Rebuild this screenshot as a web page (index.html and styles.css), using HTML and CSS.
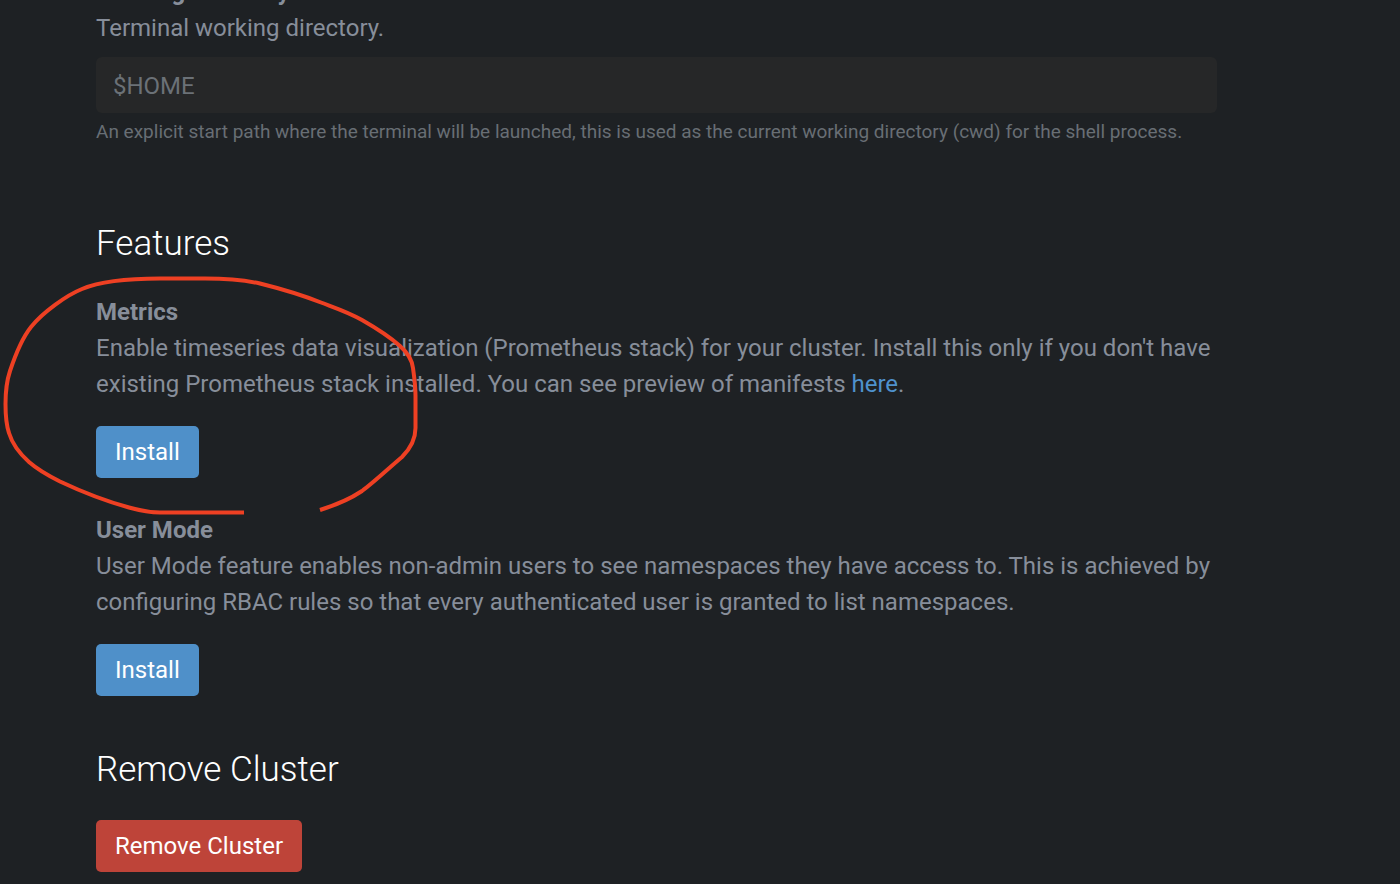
FILE: index.html
```html
<!DOCTYPE html>
<html lang="en">
<head>
<meta charset="utf-8">
<meta name="viewport" content="width=device-width, initial-scale=1">
<title>Cluster Settings</title>
<link rel="stylesheet" href="styles.css">
</head>
<body>
<main class="settings">
  <section class="field">
    <label class="subtitle" for="cwd">Working Directory</label>
    <p class="text">Terminal working directory.</p>
    <input class="input" id="cwd" type="text" placeholder="$HOME" aria-describedby="cwd-hint">
    <p class="hint" id="cwd-hint">An explicit start path where the terminal will be launched, this is used as the current working directory (cwd) for the shell process.</p>
  </section>
  <section class="group">
    <h2 class="title">Features</h2>
    <div class="features">
      <article class="feature">
        <h3 class="subtitle">Metrics</h3>
        <p class="text">Enable timeseries data visualization (Prometheus stack) for your cluster. Install this only if you don't have existing Prometheus stack installed. You can see preview of manifests <a class="link" href="#manifests">here</a>.</p>
        <button class="button" type="button">Install</button>
      </article>
      <article class="feature">
        <h3 class="subtitle">User Mode</h3>
        <p class="text">User Mode feature enables non-admin users to see namespaces they have access to. This is achieved by configuring RBAC rules so that every authenticated user is granted to list namespaces.</p>
        <button class="button" type="button">Install</button>
      </article>
    </div>
  </section>
  <section class="group">
    <h2 class="title">Remove Cluster</h2>
    <button class="button button-danger" type="button">Remove Cluster</button>
  </section>
</main>
<svg class="annotation" width="440" height="540" viewBox="0 0 440 540" aria-hidden="true">
  <path d="M244 512.500H160C149 512.500 140 510.500 129 507.500C107 501.500 78 490 60 481.500C49 476 37 469 29 462C19 453 12 443 9 433C6 424 5.500 414 5.500 404C5.500 393 6 383 10 371C16 353 23 337 31 327C43 312 67 295 82 289C102 280.500 133 278.500 160 278.500H205C222 278.500 244 280 260 283.500C280 288.500 302 295 321 302.500C341 310 349 312.500 362 320C376 328 390 337 400 346C408 353 412 360 413 368C414 376 415.500 384 415.500 396V428C415.500 440 409 450 402 457C389 468 373 483 362 491C350 499 336 505 320 510"/>
</svg>
</body>
</html>
```
FILE: styles.css
```css
* {
  box-sizing: border-box;
}

body {
  position: relative;
  margin: 0;
  overflow: hidden;
  background: #1e2124;
  color: #878e9a;
  font: 24px/36px Roboto, "Liberation Sans", sans-serif;
}

h2,
h3,
p {
  margin: 0;
}

.settings {
  display: flex;
  flex-direction: column;
  gap: 75px;
  margin-top: -26px;
  padding: 0 183px 14px 96px;
}

.field,
.group,
.feature {
  display: flex;
  flex-direction: column;
  align-items: flex-start;
}

.group + .group {
  margin-top: -24px;
}

.subtitle {
  font-size: 24px;
  font-weight: 700;
}

.title {
  margin-bottom: 27px;
  color: #fff;
  font-size: 35px;
  font-weight: 300;
  line-height: 46px;
}

.features {
  display: flex;
  flex-direction: column;
  gap: 34px;
}

.input {
  width: 100%;
  height: 56px;
  margin: 11px 0 5px;
  padding: 2px 17px 0;
  border: 0;
  border-radius: 6px;
  background: #262728;
  color: #878e9a;
  font: inherit;
}

.input::placeholder {
  color: #6b7177;
  opacity: 1;
}

.hint {
  color: #686e74;
  font-size: 19px;
  line-height: 28px;
}

.link {
  color: #4f92cd;
  text-decoration: none;
}

.button {
  height: 52px;
  padding: 0 19px;
  border: 0;
  border-radius: 5px;
  background: #4f90c9;
  color: #fff;
  font: inherit;
}

.feature .button {
  margin-top: 24px;
}

.button-danger {
  background: #be4439;
}

.annotation {
  position: absolute;
  top: 0;
  left: 0;
  fill: none;
  stroke: #ee4023;
  stroke-width: 4px;
  pointer-events: none;
}
```
